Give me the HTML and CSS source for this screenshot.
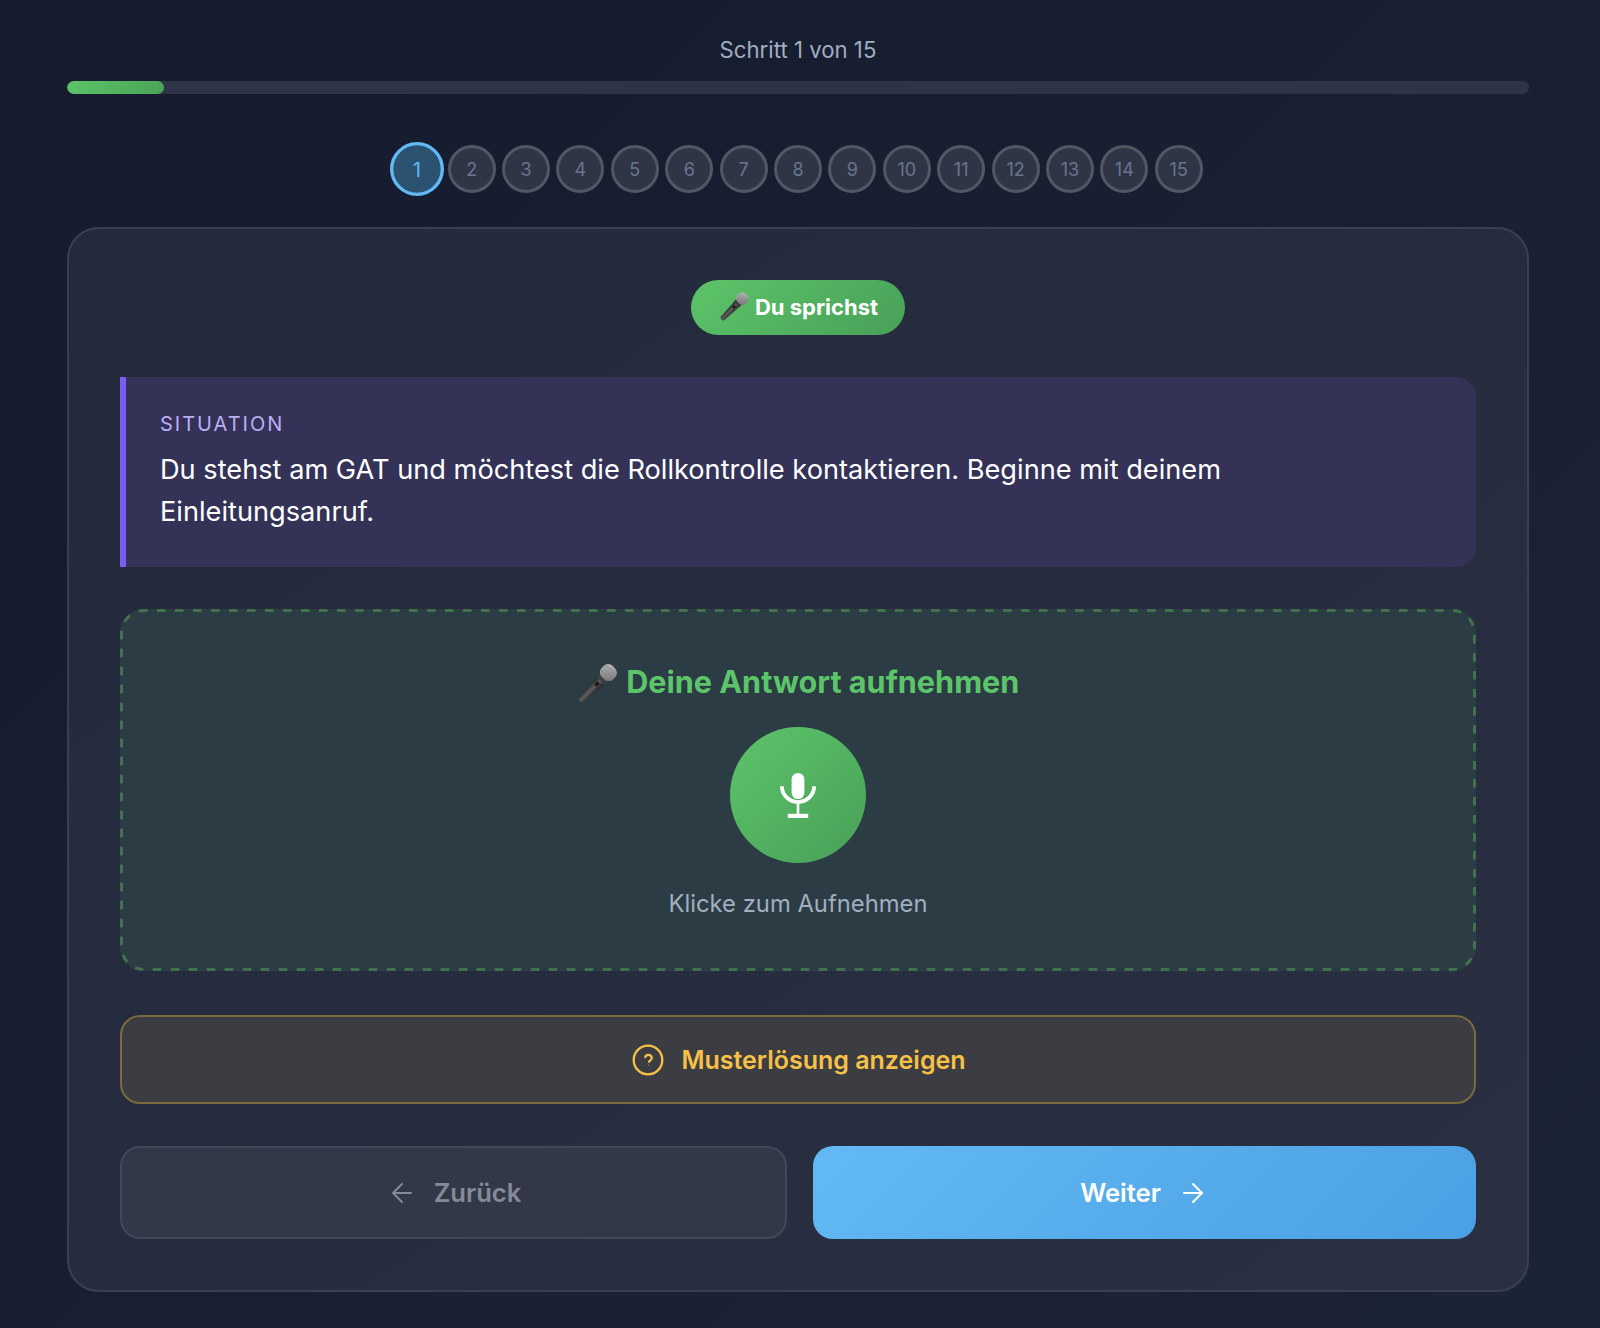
FILE: index.html
```html
<!DOCTYPE html>
<html lang="de">
<head>
<meta charset="utf-8">
<title>Schritt 1 von 15</title>
<link rel="stylesheet" href="styles.css">
</head>
<body>
<svg class="defs" width="0" height="0" aria-hidden="true">
  <defs>
    <linearGradient id="micHead" x1="0" y1="0" x2="1" y2="1">
      <stop offset="0" stop-color="#c0c0c0"/>
      <stop offset="1" stop-color="#6d6d6d"/>
    </linearGradient>
    <linearGradient id="micBody" x1="0" y1="0" x2="1" y2="0">
      <stop offset="0" stop-color="#262626"/>
      <stop offset="0.5" stop-color="#5e5e5e"/>
      <stop offset="1" stop-color="#222222"/>
    </linearGradient>
    <symbol id="emoji-mic" viewBox="0 0 40 40">
      <g transform="rotate(45 20 20)">
        <path d="M15.4 14 L24.6 14 L23 41 Q20 43.4 17 41 Z" fill="url(#micBody)"/>
        <rect x="15" y="11.5" width="10" height="4" fill="#3e3e3e"/>
        <rect x="18.6" y="18" width="2.8" height="4" rx="0.6" fill="#141414"/>
        <rect x="12.6" y="-1.8" width="14.8" height="14.2" rx="6" fill="url(#micHead)"/>
        <path d="M13.2 2.4 H26.8 M13.2 5.4 H26.8 M13.2 8.4 H26.8" stroke="#858585" stroke-width="0.8"/>
      </g>
    </symbol>
  </defs>
</svg>

<main class="page">
  <header class="progress">
    <p class="progress-label">Schritt 1 von 15</p>
    <div class="progress-track"><div class="progress-fill"></div></div>
  </header>

  <nav class="steps">
    <span class="step step-active">1</span>
    <span class="step">2</span>
    <span class="step">3</span>
    <span class="step">4</span>
    <span class="step">5</span>
    <span class="step">6</span>
    <span class="step">7</span>
    <span class="step">8</span>
    <span class="step">9</span>
    <span class="step">10</span>
    <span class="step">11</span>
    <span class="step">12</span>
    <span class="step">13</span>
    <span class="step">14</span>
    <span class="step">15</span>
  </nav>

  <section class="card">
    <div class="badge-row">
      <span class="badge"><svg class="badge-emoji"><use href="#emoji-mic"/></svg>Du sprichst</span>
    </div>

    <div class="situation">
      <div class="situation-label">SITUATION</div>
      <p class="situation-text">Du stehst am GAT und möchtest die Rollkontrolle kontaktieren. Beginne mit deinem Einleitungsanruf.</p>
    </div>

    <div class="record">
      <svg class="record-dash" aria-hidden="true"><rect class="record-dash-line" x="1.5" y="1.5" rx="22.5" ry="22.5"/></svg>
      <h2 class="record-title"><svg class="record-emoji"><use href="#emoji-mic"/></svg>Deine Antwort aufnehmen</h2>
      <button class="record-btn" type="button" aria-label="Aufnehmen">
        <svg class="record-icon" viewBox="0 0 40 48" fill="none">
          <rect x="13.6" y="2" width="12.8" height="26" rx="6.4" fill="#fff"/>
          <path d="M3.9 15.3 A16.1 15.8 0 0 0 36.1 15.3" stroke="#fff" stroke-width="3.8"/>
          <path d="M20 32 V43" stroke="#fff" stroke-width="2.6"/>
          <path d="M9.8 44.9 H30.2" stroke="#fff" stroke-width="4.2"/>
        </svg>
      </button>
      <p class="record-hint">Klicke zum Aufnehmen</p>
    </div>

    <button class="solution" type="button">
      <svg class="solution-icon" viewBox="0 0 32 32" fill="none">
        <circle cx="16" cy="16" r="14.3" stroke="currentColor" stroke-width="2.3"/>
        <path d="M13.2 13.2 A3.4 3.4 0 0 1 19.8 14 C19.8 15.8 17.8 16.4 17 17.8" stroke="currentColor" stroke-width="2.2" stroke-linecap="round"/>
        <circle cx="16.8" cy="21" r="0.5" fill="currentColor"/>
      </svg>
      Musterlösung anzeigen
    </button>

    <div class="nav">
      <button class="nav-btn nav-back" type="button">
        <svg class="nav-icon" viewBox="0 0 28 24" fill="none"><path d="M25 12 H7.5 M16 3 L7 12 L16 21" stroke="currentColor" stroke-width="2" stroke-linecap="round" stroke-linejoin="round"/></svg>
        Zurück
      </button>
      <button class="nav-btn nav-next" type="button">
        Weiter
        <svg class="nav-icon" viewBox="0 0 28 24" fill="none"><path d="M3 12 H20.5 M12 3 L21 12 L12 21" stroke="currentColor" stroke-width="2" stroke-linecap="round" stroke-linejoin="round"/></svg>
      </button>
    </div>
  </section>
</main>
</body>
</html>
```

FILE: styles.css
```css
* { box-sizing: border-box; }

html, body { margin: 0; }

body {
  min-height: 1328px;
  font-family: Inter, "Noto Sans", sans-serif;
  color: #fff;
  background: linear-gradient(135deg, #161b2e 0%, #1b2436 100%);
}

.defs { position: absolute; }

.page {
  width: 1462px;
  margin-left: 67px;
  padding-top: 35px;
}

.progress-label {
  margin: 0 0 17px;
  font-size: 22.2px;
  line-height: 29px;
  text-align: center;
  color: #a0aec0;
}

.progress-track {
  height: 13px;
  border-radius: 7px;
  background: #2d3446;
  overflow: hidden;
}

.progress-fill {
  width: 6.635%;
  height: 100%;
  border-radius: 7px;
  background: linear-gradient(135deg, #5cc469, #4aa357);
}

.steps {
  display: flex;
  justify-content: center;
  gap: 6.4px;
  margin-top: 51px;
}

.step {
  display: flex;
  align-items: center;
  justify-content: center;
  width: 48px;
  height: 48px;
  border: 3px solid #525762;
  border-radius: 50%;
  font-size: 18px;
  color: #687590;
  background: #2f3545;
}

.step-active {
  transform: scale(1.125);
  border-color: #63b9f3;
  color: #63b9f3;
  background: #2c5272;
}

.card {
  margin-top: 34px;
  padding: 51px;
  border: 2px solid #3a4050;
  border-radius: 32px;
  background: linear-gradient(145deg, #232a3c, #2a2f42);
}

.badge-row {
  display: flex;
  justify-content: center;
  margin-bottom: 42px;
}

.badge {
  display: inline-flex;
  align-items: center;
  height: 55px;
  padding: 0 27px 2px 27px;
  border-radius: 28px;
  font-size: 22px;
  font-weight: 700;
  background: linear-gradient(135deg, #5cc469, #48a058);
}

.badge-emoji {
  width: 32px;
  height: 32px;
  margin-right: 5px;
}

.situation {
  padding: 35px 40px 34px 34px;
  border-left: 6px solid #7b5cf0;
  border-radius: 0 20px 20px 0;
  background: #343256;
}

.situation-label {
  font-size: 20px;
  line-height: 24px;
  letter-spacing: 2px;
  color: #bcaef5;
}

.situation-text {
  margin: 13px 0 0;
  font-size: 27.2px;
  line-height: 42px;
  color: #fff;
}

.record {
  position: relative;
  display: flex;
  flex-direction: column;
  align-items: center;
  margin-top: 42px;
  padding: 51px 40px 51px;
  border-radius: 24px;
  background: #2c3c44;
}

.record-dash {
  position: absolute;
  inset: 0;
  width: 100%;
  height: 100%;
  pointer-events: none;
}

.record-dash-line {
  width: calc(100% - 3px);
  height: calc(100% - 3px);
  fill: none;
  stroke: #41714f;
  stroke-width: 3;
  stroke-dasharray: 8.5 9.5;
  stroke-dashoffset: -13;
}

.record-title {
  display: flex;
  align-items: center;
  margin: 0 0 23px;
  padding-right: 2px;
  font-size: 30.6px;
  line-height: 40px;
  font-weight: 700;
  color: #5cc469;
}

.record-emoji {
  width: 44px;
  height: 44px;
  margin-top: 2px;
  margin-bottom: -2px;
  margin-right: 7.5px;
}

.record-btn {
  display: flex;
  align-items: center;
  justify-content: center;
  width: 136px;
  height: 136px;
  padding: 0;
  border: 0;
  border-radius: 50%;
  background: linear-gradient(135deg, #5cc469, #48a058);
}

.record-icon {
  width: 40px;
  height: 48px;
}

.record-hint {
  margin: 25px 0 0;
  font-size: 23.8px;
  line-height: 32px;
  color: #a0aec0;
}

.solution {
  display: flex;
  align-items: center;
  justify-content: center;
  width: 100%;
  height: 89px;
  margin-top: 44px;
  padding-left: 8px;
  border: 2px solid #7b6b3f;
  border-radius: 20px;
  font-family: inherit;
  font-size: 25px;
  font-weight: 600;
  color: #f6c146;
  background: #3c3d42;
}

.solution-icon {
  width: 32px;
  height: 32px;
  margin-right: 17px;
}

.nav {
  display: flex;
  gap: 26px;
  margin-top: 42px;
}

.nav-btn {
  display: flex;
  flex: 1;
  align-items: center;
  justify-content: center;
  gap: 20px;
  height: 93px;
  border-radius: 20px;
  font-family: inherit;
  font-size: 25.6px;
  font-weight: 600;
}

.nav-icon {
  width: 28px;
  height: 24px;
}

.nav-back {
  border: 2px solid #424858;
  color: #858a96;
  background: #323848;
}

.nav-next {
  border: 0;
  color: #fff;
  background: linear-gradient(135deg, #63b9f3, #4aa0e2);
}
```
